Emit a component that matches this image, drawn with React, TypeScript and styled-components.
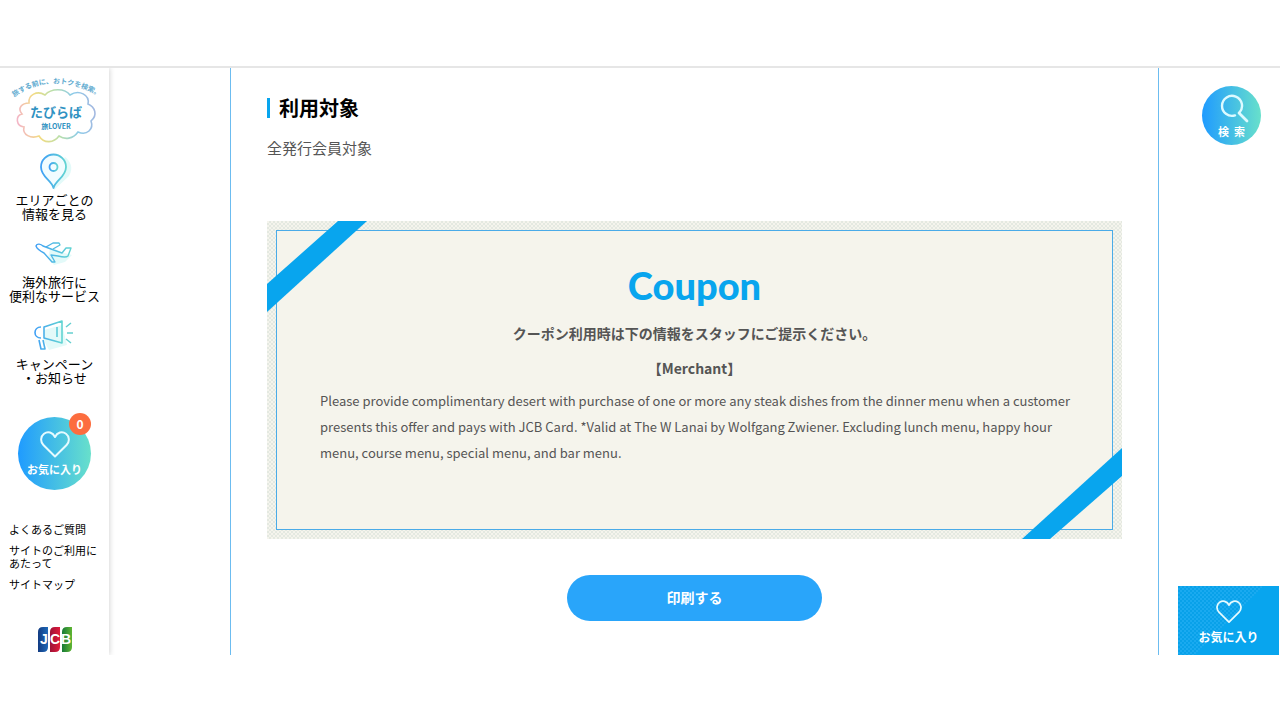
import React from "react";
import styled, { createGlobalStyle, css } from "styled-components";

const GlobalStyle = createGlobalStyle`
  *, *::before, *::after { box-sizing: border-box; }
  body {
    margin: 0;
    background: #fff;
    color: #000;
    font-family: "Noto Sans CJK JP", sans-serif;
  }
  h2, h3, p, ul { margin: 0; padding: 0; }
  ul { list-style: none; }
  a { color: inherit; text-decoration: none; }
  button { border: 0; padding: 0; font: inherit; cursor: pointer; }
  svg { display: block; }
`;

const blue = "#08a5ee";
const roundGradient = "linear-gradient(90deg, #1f9bff, #68e0cb)";

const Page = styled.div`
  padding: 66px 0 65px;
`;

const Frame = styled.div`
  display: grid;
  grid-template-columns: 109px minmax(0, 1fr) 121px;
  border-top: 2px solid #e6e6e6;
`;

const Sidebar = styled.aside`
  display: flex;
  flex-direction: column;
  align-items: center;
  padding-top: 7px;
  box-shadow: 1px 0 5px rgba(0, 0, 0, 0.16);
  clip-path: inset(0 -8px 0 0);
`;

const LogoLink = styled.a`
  margin-bottom: 6px;
`;

const MenuList = styled.ul`
  display: flex;
  flex-direction: column;
  gap: 12px;
`;

const MenuLink = styled.a`
  display: flex;
  flex-direction: column;
  align-items: center;
  height: 70px;
  font-size: 13px;
  line-height: 14px;
  text-align: center;
  white-space: nowrap;

  svg { margin-bottom: 3px; }
`;

const RoundButton = styled.button<{ $size: number }>`
  position: relative;
  display: flex;
  flex-direction: column;
  align-items: center;
  justify-content: center;
  width: ${(p) => p.$size}px;
  height: ${(p) => p.$size}px;
  border-radius: 50%;
  background: ${roundGradient};
  color: #fff;
  font-size: 11px;
  font-weight: 700;
  line-height: 14px;
  white-space: nowrap;
`;

const FavoriteRound = styled(RoundButton)`
  margin-top: 32px;
  gap: 4px;
`;

const Badge = styled.span`
  position: absolute;
  top: -4px;
  right: 0;
  width: 22px;
  height: 22px;
  border-radius: 50%;
  background: #fc6d3f;
  font-size: 12px;
  line-height: 22px;
  text-align: center;
`;

const SubLinks = styled.ul`
  display: flex;
  flex-direction: column;
  align-self: stretch;
  gap: 8px;
  margin: 33px 0 35px;
  padding-left: 9px;
  font-size: 11px;
  line-height: 13px;
`;

const Article = styled.main`
  margin-left: 121px;
  padding: 26px 36px 34px;
  border: solid #6cbcf0;
  border-width: 0 1px;
`;

const SectionTitle = styled.h2`
  display: flex;
  align-items: center;
  gap: 9px;
  font-size: 20px;
  font-weight: 700;
  line-height: 28px;

  &::before {
    content: "";
    width: 3px;
    height: 20px;
    background: ${blue};
  }
`;

const Target = styled.p`
  margin: 14px 0 61px;
  color: #555;
  font-size: 15px;
  line-height: 24px;
`;

const CouponCard = styled.section`
  position: relative;
  padding: 9px;
  background: repeating-conic-gradient(#e4e9e1 0 25%, #f5f4ed 0 50%) 0 0 / 4px 4px;
`;

const CouponBody = styled.div`
  min-height: 300px;
  padding: 33px 32px 0 43px;
  border: 1px solid #4aabe8;
  background: #f5f4ec;
  color: #555;
`;

const ribbon = css`
  position: absolute;
  width: 100px;
  height: 91px;
  background: ${blue};
`;

const RibbonStart = styled.span`
  ${ribbon}
  top: 0;
  left: 0;
  clip-path: polygon(71px 0, 100px 0, 0 91px, 0 63px);
`;

const RibbonEnd = styled.span`
  ${ribbon}
  right: 0;
  bottom: 0;
  clip-path: polygon(0 91px, 28px 91px, 100px 28px, 100px 0);
`;

const CouponHead = styled.header`
  margin-right: 11px;
  text-align: center;
`;

const CouponTitle = styled.h3`
  color: ${blue};
  font-family: Lato, sans-serif;
  font-size: 38px;
  font-weight: 900;
  line-height: 42px;
`;

const Lead = styled.p`
  margin-top: 14px;
  font-size: 14px;
  font-weight: 700;
  line-height: 26px;
`;

const Merchant = styled(Lead)`
  margin-top: 9px;
`;

const Terms = styled.p`
  margin-top: 7px;
  font-size: 13px;
  line-height: 26px;
`;

const PrintButton = styled.button`
  display: block;
  width: 255px;
  height: 46px;
  margin: 36px auto 0;
  padding-bottom: 2px;
  border-radius: 23px;
  background: #29a5fa;
  color: #fff;
  font-size: 14px;
  font-weight: 700;
`;

const SideTools = styled.aside`
  display: flex;
  flex-direction: column;
  justify-content: space-between;
  align-items: flex-end;
  padding: 18px 1px 0 0;
`;

const SearchRound = styled(RoundButton)`
  margin-right: 18px;
`;

const SearchLabel = styled.span`
  display: flex;
  gap: 5px;
`;

const FavoriteTile = styled.button`
  display: flex;
  flex-direction: column;
  align-items: center;
  gap: 5px;
  width: 101px;
  height: 69px;
  padding-top: 14px;
  background:
    linear-gradient(135deg, transparent 50%, ${blue} 50%),
    repeating-conic-gradient(#1aaaf0 0 25%, #08a1e9 0 50%) 0 0 / 4px 4px;
  color: #fff;
  font-size: 12px;
  font-weight: 700;
  line-height: 18px;
`;

const Heart = ({ width }: { width: number }) => (
  <svg width={width} viewBox="0 0 30 27" fill="none" stroke="#e6fbff" strokeWidth="2" strokeLinejoin="round" aria-hidden="true">
    <path d="M15 25.500 3.400 14C0 10.500.7 5.200 4 2.700 7.900-.2 12.800 1.400 15 6 17.200 1.400 22.100-.2 26 2.700c3.300 2.500 4 7.800.6 11.300Z" />
  </svg>
);

const Logo = () => (
  <svg width="104" height="70" viewBox="-5 0 104 70" role="img" aria-label="たびらば 旅LOVER">
    <defs>
      <linearGradient id="cloud" x1="0" x2="1" y1="0.500" y2="0.400">
        <stop offset="0" stopColor="#f3b6c6" />
        <stop offset="0.250" stopColor="#f2dc82" />
        <stop offset="0.500" stopColor="#b9dfaa" />
        <stop offset="0.750" stopColor="#8ccbe9" />
        <stop offset="1" stopColor="#a4b8e0" />
      </linearGradient>
      <path id="arc" d="M6 22Q46-6 96 24" />
    </defs>
    <path
      d="M21 28C20 20 29 15 37 20C43 13 57 13 62 20C71 14 82 20 80 29C87 32 90 40 83 46C86 54 79 61 70 57C65 64 57 65 51 61C46 68 36 69 31 61C23 64 14 60 16 52C8 51 7 41 14 39C9 33 14 28 21 28Z"
      fill="none"
      stroke="url(#cloud)"
      strokeWidth="1.600"
    />
    <g fill="#2f92c2" fontFamily="'Noto Sans CJK JP', sans-serif" fontWeight="700">
      <text fontSize="7" fill="#5fabd0">
        <textPath href="#arc">旅する前に、おトクを検索。</textPath>
      </text>
      <text x="48" y="42" fontSize="13" textAnchor="middle">たびらば</text>
      <text x="48" y="54" fontSize="7" textAnchor="middle">旅LOVER</text>
    </g>
  </svg>
);

const LineGradient = ({ id }: { id: string }) => (
  <linearGradient id={id} x1="0" x2="1" y1="0" y2="0">
    <stop offset="0" stopColor="#3f9ff5" />
    <stop offset="1" stopColor="#62d4d2" />
  </linearGradient>
);

const PinIcon = () => (
  <svg width="40" height="39" viewBox="0 -1 40 39" fill="none" aria-hidden="true">
    <defs><LineGradient id="pin" /></defs>
    <path d="M20 38 35 24c5-9 1-15-4-19L18 25Z" fill="#e3faf9" />
    <path d="M19.500 36C17.500 28 7 25 7 15a12.500 12.500 0 0 1 25 0C32 25 21.500 28 19.500 36Z" fill="#f1fcff" stroke="url(#pin)" strokeWidth="1.800" strokeLinejoin="round" />
    <circle cx="19.500" cy="15" r="4" stroke="url(#pin)" strokeWidth="1.800" />
  </svg>
);

const PlaneIcon = () => (
  <svg width="40" height="39" viewBox="0 -1 40 39" fill="none" aria-hidden="true">
    <defs><LineGradient id="plane" /></defs>
    <path d="M16 15 38 21 31 28 20 31 14 24Z" fill="#e3faf9" />
    <path
      d="M2 12C3 9 7 10 9 12L17 15 28 19 32 14H37L34 22C32 24 28 23 24 22L17 21 21 28H18L10 19C6 17 3 15 2 12ZM12 13 19 9 25 9 26 11 19 15"
      stroke="url(#plane)"
      strokeWidth="1.400"
      strokeLinejoin="round"
    />
  </svg>
);

const MegaphoneIcon = () => (
  <svg width="44" height="39" viewBox="0 0 44 39" fill="none" aria-hidden="true">
    <defs><LineGradient id="mega" /></defs>
    <path d="M12 15 30 10 35 30 17 35 12 26Z" fill="#e3faf9" />
    <g stroke="url(#mega)" strokeWidth="1.600" strokeLinejoin="round">
      <path d="M12 12 30 6V28L12 23ZM9 12C1 12 1 23 9 23M7 25 9 34H13L11 25M25 12V22" />
    </g>
    <path d="M34 12 39 8M35 18H41M34 24 39 28" stroke="#65cfd0" strokeWidth="1.500" />
  </svg>
);

const SearchIcon = () => (
  <svg width="34" height="30" viewBox="-4 -1 34 30" fill="none" stroke="#ddfaff" strokeLinecap="round" aria-hidden="true">
    <path d="M16 20.400A10 10 0 1 1 20.500 17.500" strokeWidth="2.400" />
    <path d="m20 18 8 8" strokeWidth="2.800" />
  </svg>
);

const JcbLogo = () => (
  <svg width="36" height="27" viewBox="0 0 36 27" role="img" aria-label="JCB">
    <defs>
      <linearGradient id="jcbBlue"><stop stopColor="#123b82" /><stop offset="1" stopColor="#1e69b8" /></linearGradient>
      <linearGradient id="jcbRed"><stop stopColor="#9d1237" /><stop offset="1" stopColor="#e01a3b" /></linearGradient>
      <linearGradient id="jcbGreen"><stop stopColor="#167a38" /><stop offset="1" stopColor="#5fb532" /></linearGradient>
    </defs>
    <path d="M1 6q0-5 5-5h5v20q0 5-5 5H1Z" fill="url(#jcbBlue)" />
    <path d="M13 6q0-5 5-5h5v20q0 5-5 5h-5Z" fill="url(#jcbRed)" />
    <path d="M25 6q0-5 5-5h5v20q0 5-5 5h-5Z" fill="url(#jcbGreen)" />
    <g fill="#fff" fontFamily="'Liberation Sans', sans-serif" fontSize="14" fontWeight="700" textAnchor="middle">
      <text x="7" y="18">J</text>
      <text x="18" y="18">C</text>
      <text x="29" y="18">B</text>
    </g>
  </svg>
);

const menu = [
  { Icon: PinIcon, lines: ["エリアごとの", "情報を見る"] },
  { Icon: PlaneIcon, lines: ["海外旅行に", "便利なサービス"] },
  { Icon: MegaphoneIcon, lines: ["キャンペーン", "・お知らせ"] },
];

export default function App() {
  return (
    <Page>
      <GlobalStyle />
      <Frame>
        <Sidebar>
          <LogoLink href="#top"><Logo /></LogoLink>
          <MenuList>
            {menu.map(({ Icon, lines }) => (
              <li key={lines[0]}>
                <MenuLink href="#menu">
                  <Icon />
                  {lines.map((line) => <span key={line}>{line}</span>)}
                </MenuLink>
              </li>
            ))}
          </MenuList>
          <FavoriteRound $size={73} type="button">
            <Heart width={30} />
            お気に入り
            <Badge>0</Badge>
          </FavoriteRound>
          <SubLinks>
            <li><a href="#faq">よくあるご質問</a></li>
            <li><a href="#terms">サイトのご利用に<br />あたって</a></li>
            <li><a href="#sitemap">サイトマップ</a></li>
          </SubLinks>
          <a href="#jcb"><JcbLogo /></a>
        </Sidebar>
        <Article>
          <SectionTitle>利用対象</SectionTitle>
          <Target>全発行会員対象</Target>
          <CouponCard>
            <CouponBody>
              <CouponHead>
                <CouponTitle>Coupon</CouponTitle>
                <Lead>クーポン利用時は下の情報をスタッフにご提示ください。</Lead>
                <Merchant>【Merchant】</Merchant>
              </CouponHead>
              <Terms>
                Please provide complimentary desert with purchase of one or more any steak dishes from the dinner menu when a customer
                presents this offer and pays with JCB Card. *Valid at The W Lanai by Wolfgang Zwiener. Excluding lunch menu, happy hour
                menu, course menu, special menu, and bar menu.
              </Terms>
            </CouponBody>
            <RibbonStart />
            <RibbonEnd />
          </CouponCard>
          <PrintButton type="button">印刷する</PrintButton>
        </Article>
        <SideTools>
          <SearchRound $size={59} type="button">
            <SearchIcon />
            <SearchLabel><span>検</span><span>索</span></SearchLabel>
          </SearchRound>
          <FavoriteTile type="button">
            <Heart width={26} />
            お気に入り
          </FavoriteTile>
        </SideTools>
      </Frame>
    </Page>
  );
}
